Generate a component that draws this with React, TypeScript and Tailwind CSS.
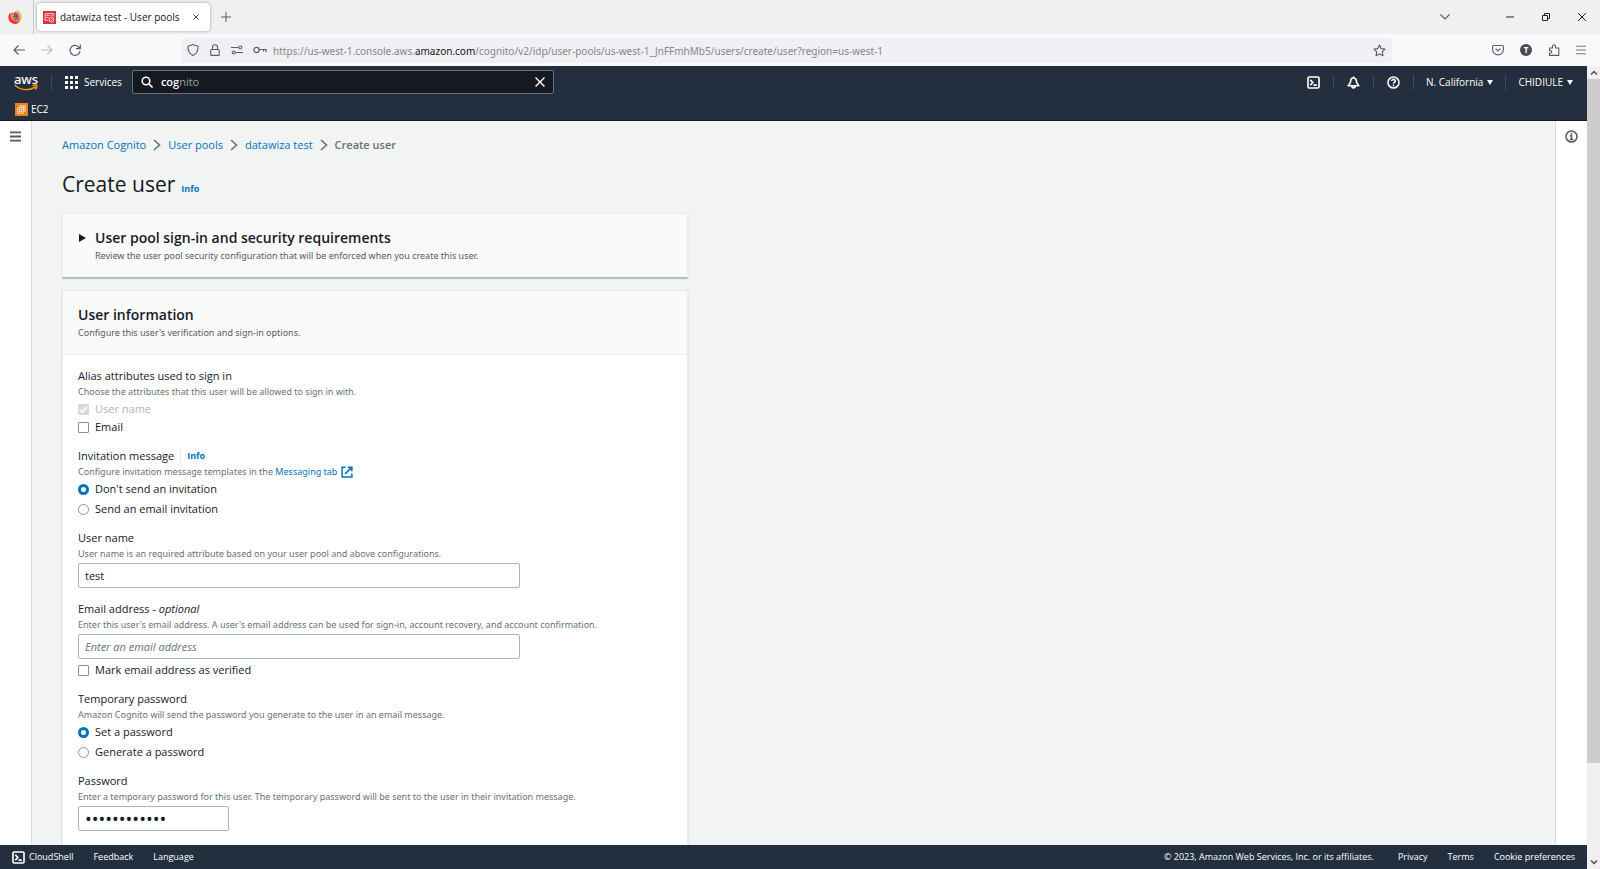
import { useState } from 'react';
import type { ReactNode } from 'react';

interface IconProps {
  className?: string;
}

function FirefoxIcon() {
  return (
    <svg viewBox="0 0 24 24" className="size-3.5" aria-hidden="true">
      <path d="M12 3c3 0 4 .5 5.500 1.500C17.500 2.800 16 1.500 15 .5c5 2 8.500 7 8 12.500C22.500 19 18 23.500 12 23.500S1 18.800 1 12.500C1 9.500 2 6.500 3.500 4.500l.8 2.300C5 5.500 6 4.300 7.500 3.500L7.800 6z" fill="#ff7139" />
      <path d="M15 .5c5 2 8.500 7 8 12.500-.3 3-1.500 5.500-3.500 7.500 1-4 .5-9-1.500-12-1-1.700-3-4-3-8z" fill="#ffbd2e" />
      <path d="M1 12.500c0 6.300 5 11 11 11 3 0 5.500-1 7.500-3-8 1.500-15-2-16-9L3.500 4.500C2 6.500 1 9.500 1 12.500z" fill="#e8203c" />
      <circle cx="12.500" cy="11" r="5.500" fill="#5b5bd6" />
      <path d="M5 8c2-1.500 5-.5 6.500 1-1.500.5-2.500 1.500-2.500 2.500 0 2 3 2.500 5 1.500-1 4-8 4-8.500-.5C5 11 4.500 9 5 8z" fill="#ff980e" />
    </svg>
  );
}

function CognitoIcon() {
  return (
    <svg viewBox="0 0 24 24" className="size-[13px] shrink-0" aria-hidden="true">
      <path d="M0 0h24v24H0z" fill="#dd2f3c" />
      <g fill="none" stroke="#fff" strokeWidth="1.500">
        <path d="M9 17H4V5h16v5M6.500 8.500h5M6.500 12h3.500M14 8.500h3" />
        <circle cx="15.500" cy="16" r="4.500" />
        <path d="m13.500 16 1.500 1.500 2.500-3" />
      </g>
    </svg>
  );
}

function Ec2Icon() {
  return (
    <svg viewBox="0 0 24 24" className="size-[13px]" aria-hidden="true">
      <path d="M0 0h24v24H0z" fill="#ed7f18" />
      <g fill="none" stroke="#fff" strokeWidth="1.300">
        <path d="M9 9V5h10v10h-4M5 9h10v10H5zM8 12h4v4H8zM12 9V7.500h4.500V12H15" />
      </g>
    </svg>
  );
}

function ShellIcon({ className }: IconProps) {
  return (
    <svg viewBox="0 0 16 16" className={className} fill="none" stroke="currentColor" strokeWidth="2" aria-hidden="true">
      <rect x="1.200" y="1.200" width="13.600" height="13.600" rx="1.500" />
      <path d="m4 4.800 3.200 3.200L4 11.200M8 11.300h4" />
    </svg>
  );
}

function BellIcon() {
  return (
    <svg viewBox="0 0 16 16" className="size-[13px]" fill="none" stroke="currentColor" strokeWidth="2" strokeLinejoin="round" aria-hidden="true">
      <path d="M8 .5v2M8 2.500c-2.300 0-3.500 1.700-3.500 3.700C4.500 9 3 10 1.500 12h13C13 10 11.500 9 11.500 6.200c0-2-1.200-3.700-3.500-3.700zM6 12c0 3.500 4 3.500 4 0" />
    </svg>
  );
}

function HelpIcon() {
  return (
    <svg viewBox="0 0 16 16" className="size-[13px]" fill="none" stroke="currentColor" strokeWidth="1.900" aria-hidden="true">
      <circle cx="8" cy="8" r="6.800" />
      <path d="M5.800 6.300c0-3 4.600-2.700 4.400 0C10 7.800 8 7.800 8 9.600M8 10.800v1.700" />
    </svg>
  );
}

function InfoIcon() {
  return (
    <svg viewBox="0 0 16 16" className="size-[13px]" fill="none" stroke="currentColor" strokeWidth="1.900" aria-hidden="true">
      <circle cx="8" cy="8" r="6.800" />
      <path d="M8 3.500v2M6 7.200h2v4.300M5.800 11.800h4.400" />
    </svg>
  );
}

function ExternalIcon() {
  return (
    <svg viewBox="0 0 16 16" className="size-3" fill="none" stroke="currentColor" strokeWidth="2" aria-hidden="true">
      <path d="M6 1.500H1.500v13h13V10M9 1.500h5.500V7M14.500 1.500 5.500 10.500" />
    </svg>
  );
}

function MenuIcon({ className }: IconProps) {
  return (
    <svg viewBox="0 0 12 12" className={className} stroke="currentColor" aria-hidden="true">
      <path d="M0 1.500h12M0 6h12M0 10.500h12" />
    </svg>
  );
}

function CaretDown() {
  return (
    <svg viewBox="0 0 6 5" className="h-[5px] w-1.5" fill="currentColor" aria-hidden="true">
      <path d="M0 0h6L3 5z" />
    </svg>
  );
}

function Crumb({ children }: { children: ReactNode }) {
  return (
    <li className="flex items-center gap-[7px]">
      <a href="#" className="text-[#0073bb]">{children}</a>
      <svg viewBox="0 0 8 12" className="mr-[7px] h-3 w-2" fill="none" stroke="#687078" strokeWidth="1.600" aria-hidden="true">
        <path d="m1 1 5.500 5L1 11" />
      </svg>
    </li>
  );
}

interface OptionProps {
  type: 'radio' | 'checkbox';
  id: string;
  label: string;
  name?: string;
  checked: boolean;
  disabled?: boolean;
  onChange: () => void;
}

function Option({ type, id, label, name, checked, disabled, onChange }: OptionProps) {
  return (
    <div className="flex h-4 items-center gap-1.5">
      <span className="relative flex size-[11px] shrink-0">
        {type === 'radio' ? (
          <input
            type="radio"
            id={id}
            name={name}
            checked={checked}
            onChange={onChange}
            className="size-full appearance-none rounded-full border border-[#879596] bg-white checked:border-[3px] checked:border-[#0073bb]"
          />
        ) : (
          <input
            type="checkbox"
            id={id}
            checked={checked}
            disabled={disabled}
            onChange={onChange}
            className="size-full appearance-none rounded-[1px] border border-[#879596] bg-white checked:border-[#0073bb] checked:bg-[#0073bb] disabled:border-[#d5dbdb] disabled:bg-[#d5dbdb]"
          />
        )}
        {type === 'checkbox' && checked && (
          <svg viewBox="0 0 11 11" className="pointer-events-none absolute inset-0" fill="none" stroke="#fff" strokeWidth="1.600" aria-hidden="true">
            <path d="m2 5.800 2.300 2.200 4.500-5.500" />
          </svg>
        )}
      </span>
      <label htmlFor={id} className={disabled ? 'text-[#aab7b8]' : ''}>{label}</label>
    </div>
  );
}

function Hint({ children }: { children: ReactNode }) {
  return <p className="flex h-[15px] items-center gap-1 font-['Noto_Sans'] text-[9px] whitespace-nowrap text-[#687078]">{children}</p>;
}

function BrowserChrome() {
  return (
    <div className="bg-[#f9f9fb] font-['Noto_Sans'] text-[#5b5b66]">
      <div className="flex h-[34px] items-center bg-[#f0f0f0]">
        <div className="flex h-full w-[34px] items-center justify-center border-r border-[#c8c8cc] pr-1">
          <FirefoxIcon />
        </div>
        <div className="ml-[3px] flex h-7 w-[173px] items-center rounded bg-white px-1.5 shadow-[0_0_3px_rgba(0,0,0,0.4)]">
          <CognitoIcon />
          <span className="ml-1 flex-1 font-['Open_Sans'] text-[10px] whitespace-nowrap text-[#15141a]">datawiza test - User pools</span>
          <button aria-label="Close tab" className="flex size-4 items-center justify-center">
            <svg viewBox="0 0 8 8" className="size-1.5" stroke="#333" strokeWidth="1.200"><path d="m.5.5 7 7m0-7-7 7" /></svg>
          </button>
        </div>
        <button aria-label="New tab" className="ml-2 flex size-4 items-center justify-center">
          <svg viewBox="0 0 10 10" className="size-2.5" stroke="currentColor"><path d="M5 0v10M0 5h10" /></svg>
        </button>
        <div className="ml-auto flex items-center pr-3.5">
          <button aria-label="List all tabs" className="mr-14">
            <svg viewBox="0 0 10 6" className="h-1.5 w-2.5" fill="none" stroke="currentColor" strokeWidth="1.200"><path d="m.5.5 4.500 4.500L9.500.5" /></svg>
          </button>
          <div className="flex items-center gap-7 text-[#222]">
            <button aria-label="Minimize">
              <svg viewBox="0 0 8 8" className="size-2" stroke="currentColor"><path d="M0 4h8" /></svg>
            </button>
            <button aria-label="Restore">
              <svg viewBox="0 0 8 8" className="size-2" fill="none" stroke="currentColor"><path d="M.5 2.500h5v5h-5zM2.500 2.500v-2h5v5h-2" /></svg>
            </button>
            <button aria-label="Close window">
              <svg viewBox="0 0 8 8" className="size-2" stroke="currentColor"><path d="m0 0 8 8M8 0 0 8" /></svg>
            </button>
          </div>
        </div>
      </div>

      <div className="flex h-8 items-center pr-3.5 pl-[13px]">
        <div className="flex w-[168px] items-center gap-4">
          <button aria-label="Back">
            <svg viewBox="0 0 12 12" className="size-3" fill="none" stroke="currentColor" strokeWidth="1.200"><path d="M12 6H1M5.500 1.500 1 6l4.500 4.500" /></svg>
          </button>
          <button aria-label="Forward" className="text-[#bdbdc2]">
            <svg viewBox="0 0 12 12" className="size-3" fill="none" stroke="currentColor" strokeWidth="1.200"><path d="M0 6h11M6.500 1.500 11 6l-4.500 4.500" /></svg>
          </button>
          <button aria-label="Reload">
            <svg viewBox="0 0 12 12" className="size-3" fill="none" stroke="currentColor" strokeWidth="1.200"><path d="M10.700 4.500A5 5 0 1 0 11 7M11.300.5v4.200H7" /></svg>
          </button>
        </div>
        <div className="flex h-[25px] flex-1 items-center gap-2.5 rounded bg-[#f0f0f4] px-1.5">
          <svg viewBox="0 0 12 12" className="size-3" fill="none" stroke="currentColor" strokeWidth="1.100" strokeLinejoin="round"><path d="M6 .6 11 2.300c.2 4-1.300 7.500-5 9.100C2.300 9.800.8 6.300 1 2.300z" /></svg>
          <svg viewBox="0 0 12 12" className="size-3" fill="none" stroke="currentColor" strokeWidth="1.100"><rect x="1.700" y="5.500" width="8.600" height="5.900" rx="1" /><path d="M3.500 5.500V3.200a2.500 2.500 0 0 1 5 0v2.300" /></svg>
          <svg viewBox="0 0 12 12" className="size-3" fill="none" stroke="currentColor" strokeWidth="1.100"><path d="M0 3.500h7.500M4.500 8.500H12" /><circle cx="9.300" cy="3.500" r="1.500" /><circle cx="2.700" cy="8.500" r="1.500" /></svg>
          <svg viewBox="0 0 14 12" className="h-3 w-3.5" fill="none" stroke="currentColor" strokeWidth="1.200"><circle cx="3.500" cy="6" r="2.600" /><path d="M6.100 5.500H13v2.500M10.500 5.500v2" /></svg>
          <div
            role="textbox"
            aria-label="Address"
            contentEditable
            suppressContentEditableWarning
            className="-ml-1 flex-1 pt-0.5 text-[10px] whitespace-nowrap text-[#85858c] outline-none"
          >
            https://us-west-1.console.aws.<span className="text-[#15141a]">amazon.com</span>/cognito/v2/idp/user-pools/us-west-1_JnFFmhMb5/users/create/user?region=us-west-1
          </div>
          <button aria-label="Bookmark this page">
            <svg viewBox="0 0 24 24" className="size-[13px]" fill="none" stroke="currentColor" strokeWidth="2" strokeLinejoin="round"><path d="m12 2 3.100 6.500 7 1-5 5 1.200 7.100L12 18.200l-6.300 3.400 1.200-7.100-5-5 7-1z" /></svg>
          </button>
        </div>
        <div className="ml-[100px] flex items-center gap-4">
          <button aria-label="Save to Pocket">
            <svg viewBox="0 0 12 12" className="size-3" fill="none" stroke="currentColor" strokeWidth="1.100"><path d="M.6 2.500c0-.6.4-1 1-1h8.800c.6 0 1 .4 1 1v3a5.400 5.400 0 0 1-10.800 0zM3.500 4.700 6 7l2.500-2.300" /></svg>
          </button>
          <button aria-label="Account" className="flex size-3 items-center justify-center rounded-full bg-[#4a4a55] text-[8px] leading-3 font-bold text-white">T</button>
          <button aria-label="Extensions">
            <svg viewBox="0 0 12 12" className="size-3" fill="none" stroke="currentColor" strokeWidth="1.100" strokeLinejoin="round"><path d="M1.500 11.400V9c3 .5 3-3 0-2.500V4h3C3.800-.3 8.200-.3 7.500 4h3.300v7.400z" /></svg>
          </button>
          <button aria-label="Application menu"><MenuIcon className="h-2.5 w-2.5" /></button>
        </div>
      </div>
    </div>
  );
}

function AwsHeader() {
  const [query, setQuery] = useState('cog');

  return (
    <header className="h-[55px] border-b border-[#16191f] bg-[#232f3e] text-[10px] text-white">
      <div className="flex h-8 items-center">
        <a href="#" aria-label="AWS home" className="ml-3.5 flex w-6 flex-col items-center">
          <span className="font-['Noto_Sans'] text-[13px] leading-[10px] font-medium">aws</span>
          <svg viewBox="0 0 24 7" className="h-[7px] w-6" fill="none" stroke="#f90" strokeWidth="1.600">
            <path d="M.5 1C7 6.500 15 6.800 21.500 3M18.500 1.500c3-.8 4.500-.5 4.300.3-.1 1-.5 2.500-1.300 3.700" />
          </svg>
        </a>
        <div className="mx-[13px] h-4 w-px bg-[#3f4c5b]" />
        <button className="flex items-center gap-1.5">
          <svg viewBox="0 0 13 13" className="size-[13px]" fill="currentColor">
            <path d="M0 0h3v3H0zM5 0h3v3H5zM10 0h3v3h-3zM0 5h3v3H0zM5 5h3v3H5zM10 5h3v3h-3zM0 10h3v3H0zM5 10h3v3H5zM10 10h3v3h-3z" />
          </svg>
          <span className="font-medium">Services</span>
        </button>
        <div className="ml-2.5 flex h-6 w-[422px] items-center gap-2 rounded-[2px] border border-[#687078] bg-[#16191f] px-2 text-[11px]">
          <svg viewBox="0 0 12 12" className="size-3" fill="none" stroke="currentColor" strokeWidth="1.600"><circle cx="5" cy="5" r="3.800" /><path d="m7.800 7.800 3.700 3.700" /></svg>
          <div className="relative flex-1">
            <input
              aria-label="Search"
              value={query}
              onChange={(e) => setQuery(e.target.value)}
              className="w-full font-semibold outline-none"
            />
            {query === 'cog' && (
              <span className="pointer-events-none absolute inset-0 text-[#95a5a6]">
                <span className="invisible font-semibold">cog</span>nito
              </span>
            )}
          </div>
          <button aria-label="Clear search" onClick={() => setQuery('')}>
            <svg viewBox="0 0 10 10" className="size-2.5" stroke="currentColor" strokeWidth="1.400"><path d="m.5.5 9 9m0-9-9 9" /></svg>
          </button>
        </div>
        <div className="ml-auto flex items-center pr-0.5">
          <button aria-label="CloudShell" className="px-[13px]"><ShellIcon className="size-[13px]" /></button>
          <button aria-label="Notifications" className="border-l border-[#3f4c5b] px-[13px]"><BellIcon /></button>
          <button aria-label="Help" className="border-l border-[#3f4c5b] px-[13px]"><HelpIcon /></button>
          <button className="flex items-center gap-1 border-l border-[#3f4c5b] px-3 font-medium">
            N. California <CaretDown />
          </button>
          <button className="flex items-center gap-1 border-l border-[#3f4c5b] px-3 font-medium">
            CHIDIULE <CaretDown />
          </button>
        </div>
      </div>
      <a href="#" className="ml-[15px] flex h-[22px] w-fit items-center gap-[3px] font-medium">
        <Ec2Icon />
        EC2
      </a>
    </header>
  );
}

function UserForm() {
  const [emailAlias, setEmailAlias] = useState(false);
  const [invite, setInvite] = useState(false);
  const [verified, setVerified] = useState(false);
  const [generate, setGenerate] = useState(false);

  return (
    <form className="flex flex-col gap-[13px] bg-white px-[15px] pt-[13px] pb-8 leading-4">
      <fieldset>
        <legend className="font-medium">Alias attributes used to sign in</legend>
        <Hint>Choose the attributes that this user will be allowed to sign in with.</Hint>
        <div className="mt-0.5 flex flex-col gap-0.5">
          <Option type="checkbox" id="alias-name" label="User name" checked disabled onChange={() => {}} />
          <Option type="checkbox" id="alias-email" label="Email" checked={emailAlias} onChange={() => setEmailAlias(!emailAlias)} />
        </div>
      </fieldset>

      <fieldset>
        <legend className="flex items-center font-medium">
          Invitation message
          <a href="#" className="ml-1.5 border-l border-[#eaeded] pl-1.5 text-[9px] font-bold text-[#0073bb]">Info</a>
        </legend>
        <Hint>
          <span>Configure invitation message templates in the <a href="#" className="text-[#0073bb]">Messaging tab</a></span>
          <span className="text-[#0073bb]"><ExternalIcon /></span>
        </Hint>
        <div className="mt-0.5 flex flex-col gap-1">
          <Option type="radio" name="invite" id="invite-none" label="Don't send an invitation" checked={!invite} onChange={() => setInvite(false)} />
          <Option type="radio" name="invite" id="invite-email" label="Send an email invitation" checked={invite} onChange={() => setInvite(true)} />
        </div>
      </fieldset>

      <div className="flex flex-col">
        <label htmlFor="username" className="font-medium">User name</label>
        <Hint>User name is an required attribute based on your user pool and above configurations.</Hint>
        <input id="username" defaultValue="test" className="mt-0.5 h-[25px] w-[442px] rounded-[2px] border border-[#aab7b8] px-1.5 outline-none" />
      </div>

      <div className="flex flex-col">
        <label htmlFor="email" className="font-medium">Email address - <i className="font-normal">optional</i></label>
        <Hint>Enter this user's email address. A user's email address can be used for sign-in, account recovery, and account confirmation.</Hint>
        <input
          id="email"
          type="email"
          placeholder="Enter an email address"
          className="mt-0.5 mb-[3px] h-[25px] w-[442px] rounded-[2px] border border-[#aab7b8] px-1.5 outline-none placeholder:text-[#687078] placeholder:italic"
        />
        <Option type="checkbox" id="verified" label="Mark email address as verified" checked={verified} onChange={() => setVerified(!verified)} />
      </div>

      <fieldset>
        <legend className="font-medium">Temporary password</legend>
        <Hint>Amazon Cognito will send the password you generate to the user in an email message.</Hint>
        <div className="mt-0.5 flex flex-col gap-1">
          <Option type="radio" name="temp" id="temp-set" label="Set a password" checked={!generate} onChange={() => setGenerate(false)} />
          <Option type="radio" name="temp" id="temp-generate" label="Generate a password" checked={generate} onChange={() => setGenerate(true)} />
        </div>
      </fieldset>

      <div className="flex flex-col">
        <label htmlFor="password" className="font-medium">Password</label>
        <Hint>Enter a temporary password for this user. The temporary password will be sent to the user in their invitation message.</Hint>
        <input id="password" type="password" defaultValue="Passw0rd!234" className="mt-0.5 h-[25px] w-[151px] rounded-[2px] border border-[#aab7b8] px-1.5 text-[18px] outline-none" />
      </div>
    </form>
  );
}

export default function App() {
  return (
    <div className="flex h-screen flex-col overflow-hidden font-['Open_Sans',sans-serif] text-[11px] text-[#16191f]">
      <BrowserChrome />

      <div className="flex min-h-0 flex-1">
        <div className="flex min-w-0 flex-1 flex-col">
          <AwsHeader />

          <div className="flex min-h-0 flex-1">
            <aside className="w-8 shrink-0 border-r border-[#d5dbdb] bg-white">
              <button aria-label="Open navigation" className="mt-2.5 ml-2.5 block text-[#545b64]">
                <MenuIcon className="size-[11px] stroke-2" />
              </button>
            </aside>

            <main className="min-w-0 flex-1 overflow-hidden bg-[#f2f3f3] px-[30px]">
              <nav aria-label="Breadcrumb" className="mt-4">
                <ol className="flex h-4 items-center">
                  <Crumb>Amazon Cognito</Crumb>
                  <Crumb>User pools</Crumb>
                  <Crumb>datawiza test</Crumb>
                  <li className="font-semibold text-[#687078]">Create user</li>
                </ol>
              </nav>

              <div className="mt-[15px] flex h-8 items-baseline gap-1.5">
                <h1 className="text-[21px] leading-8">Create user</h1>
                <a href="#" className="text-[9px] font-bold text-[#0073bb]">Info</a>
              </div>

              <div className="mt-[13px] max-w-[626px]">
                <section className="flex h-[65px] border border-[#eaeded] border-b-[#aab7b8] bg-[#fafafa] pt-4 pl-4 shadow-[0_1px_1px_rgba(0,28,36,0.2)]">
                  <button aria-label="Expand requirements" className="h-4 w-4">
                    <svg viewBox="0 0 8 8" className="size-2" fill="#16191f"><path d="M0 0v8l7-4z" /></svg>
                  </button>
                  <div>
                    <h2 className="text-[14px] leading-4 font-semibold">User pool sign-in and security requirements</h2>
                    <p className="mt-[3px] font-['Noto_Sans'] text-[9px] leading-3.5 text-[#545b64]">Review the user pool security configuration that will be enforced when you create this user.</p>
                  </div>
                </section>

                <section className="mt-3 border border-[#eaeded] bg-white shadow-[0_1px_1px_rgba(0,28,36,0.3)]">
                  <div className="h-16 border-b border-[#eaeded] bg-[#fafafa] px-[15px] pt-4">
                    <h2 className="text-[14px] leading-4 font-semibold">User information</h2>
                    <p className="mt-[3px] font-['Noto_Sans'] text-[9px] leading-3.5 text-[#545b64]">Configure this user's verification and sign-in options.</p>
                  </div>
                  <UserForm />
                </section>
              </div>
            </main>

            <aside className="w-8 shrink-0 border-l border-[#d5dbdb] bg-white">
              <button aria-label="Open help panel" className="mt-[9px] ml-[9px] block text-[#545b64]">
                <InfoIcon />
              </button>
            </aside>
          </div>

          <footer className="flex h-6 shrink-0 items-center bg-[#232f3e] px-3 text-[9px] font-medium text-white">
            <a href="#" className="flex items-center gap-1"><ShellIcon className="size-[13px]" />CloudShell</a>
            <a href="#" className="ml-5">Feedback</a>
            <button className="ml-5">Language</button>
            <span className="ml-auto">© 2023, Amazon Web Services, Inc. or its affiliates.</span>
            <a href="#" className="ml-6">Privacy</a>
            <a href="#" className="ml-5">Terms</a>
            <a href="#" className="ml-5">Cookie preferences</a>
          </footer>
        </div>

        <div className="flex w-[13px] shrink-0 flex-col items-center bg-[#f0f0f0] text-[#505050]">
          <svg viewBox="0 0 8 5" className="my-1 h-[5px] w-2 shrink-0" fill="none" stroke="currentColor" strokeWidth="1.500"><path d="m1 4.500 3-3 3 3" /></svg>
          <div className="w-full flex-1">
            <div className="h-[88%] bg-[#cdcdcd]" />
          </div>
          <svg viewBox="0 0 8 5" className="my-1 h-[5px] w-2 shrink-0" fill="none" stroke="currentColor" strokeWidth="1.500"><path d="m1 .5 3 3 3-3" /></svg>
        </div>
      </div>
    </div>
  );
}
